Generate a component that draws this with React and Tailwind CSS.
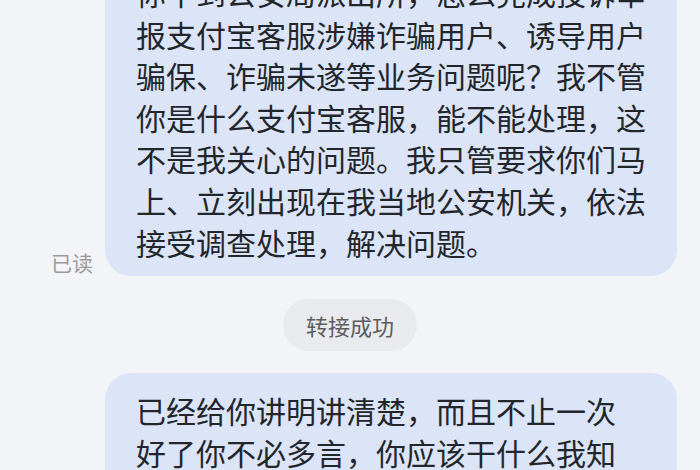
import React from "react";

const firstLines = [
  "你不到公安局派出所，怎么完成投诉举",
  "报支付宝客服涉嫌诈骗用户、诱导用户",
  "骗保、诈骗未遂等业务问题呢？我不管",
  "你是什么支付宝客服，能不能处理，这",
  "不是我关心的问题。我只管要求你们马",
  "上、立刻出现在我当地公安机关，依法",
  "接受调查处理，解决问题。"
];

const secondLines = [
  "已经给你讲明讲清楚，而且不止一次",
  "好了你不必多言，你应该干什么我知",
  "道。"
];

const Bubble = ({ lines, className = "" }) => (
  <div
    className={`w-[572px] rounded-[26px] bg-[#dbe5f7] pl-[31px] pr-[20px] pt-[17px] pb-[13px] text-[30px] leading-[41.6px] text-[#22262b] ${className}`}
  >
    {lines.map((line, i) => (
      <div key={i} className="whitespace-nowrap">
        {line}
      </div>
    ))}
  </div>
);

export default function App() {
  return (
    <div
      className="h-[470px] w-[700px] overflow-hidden bg-[#f3f4f8]"
      style={{ fontFamily: '"Noto Sans CJK SC", "Noto Sans", sans-serif' }}
    >
      {/* my message, top cut off */}
      <div className="-mt-[45px] flex items-end justify-end gap-[12px] pr-[23px]">
        <span className="text-[21px] leading-[28px] text-[#9a9a9a]">已读</span>
        <Bubble lines={firstLines} />
      </div>

      {/* system notice */}
      <div className="mt-[23px] flex justify-center">
        <div className="flex h-[52px] w-[134px] items-center justify-center rounded-full bg-[#e9eaee] text-[22px] text-[#5c5c5c]">
          转接成功
        </div>
      </div>

      <div className="mt-[22px] flex justify-end pr-[23px]">
        <Bubble lines={secondLines} />
      </div>
    </div>
  );
}
